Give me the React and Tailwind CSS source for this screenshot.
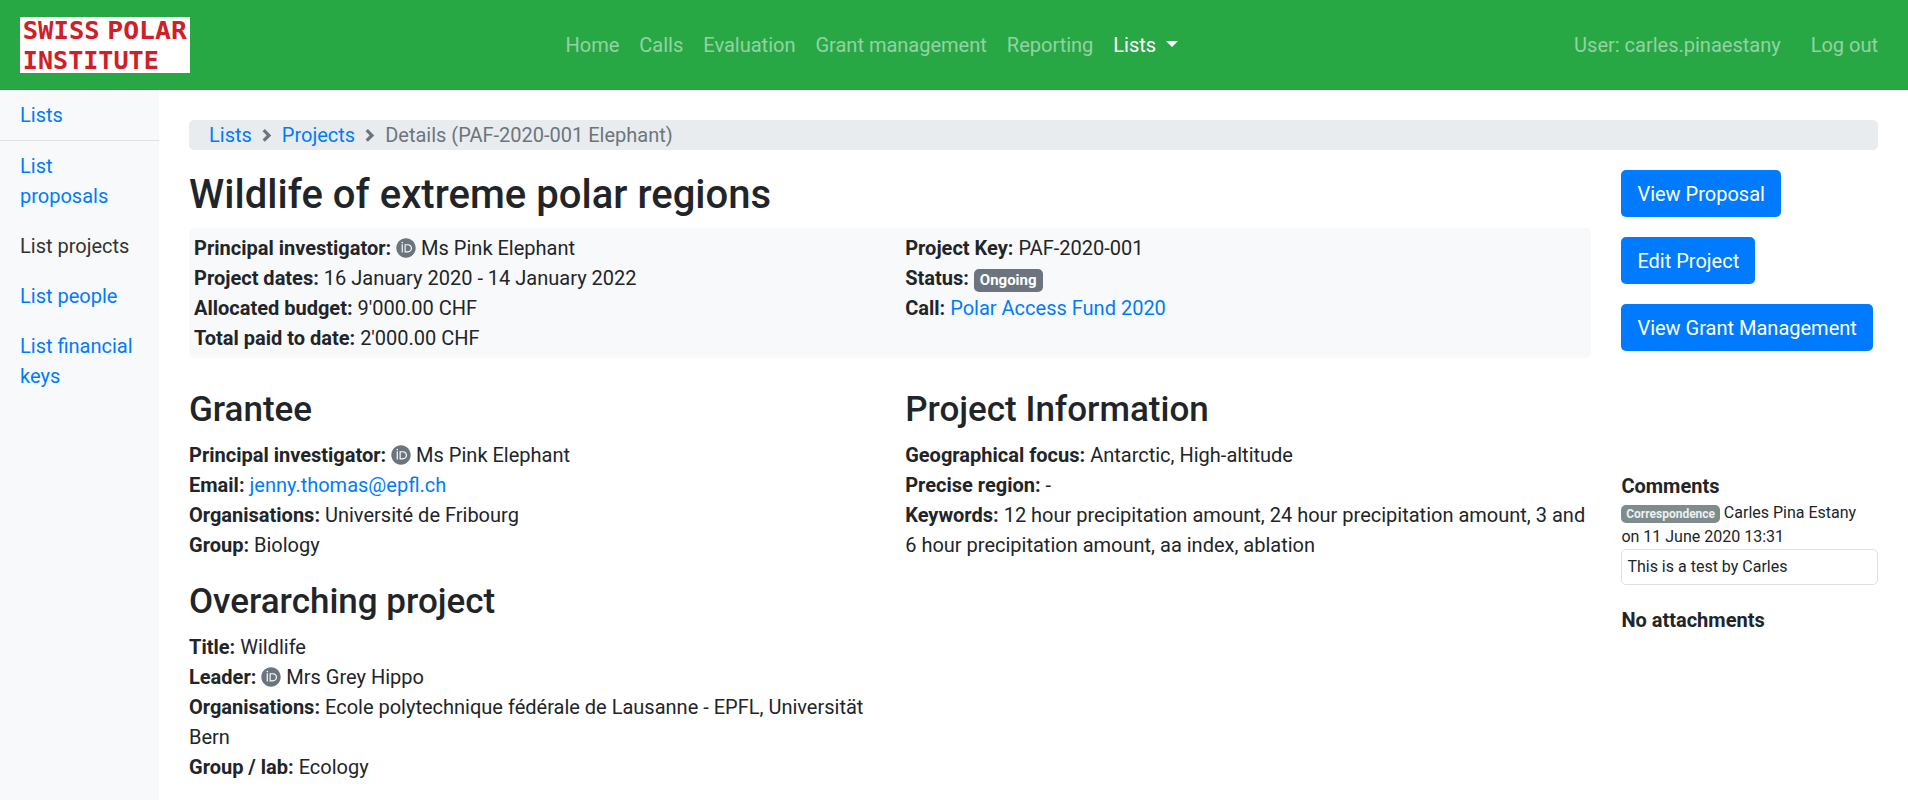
import React from "react";

function Orcid() {
  return (
    <svg viewBox="0 0 512 512" className="inline-block h-5 w-5 align-[-2.5px]" fill="#6c757d">
      <path d="M294.75 188.19h-45.92V342h47.47c67.62 0 83.12-51.34 83.12-76.91 0-41.64-26.54-76.9-84.67-76.9zM256 8C119 8 8 119 8 256s111 248 248 248 248-111 248-248S393 8 256 8zm-80.79 360.76h-29.84v-207.5h29.84zm-14.92-231.14a19.57 19.57 0 1 1 19.57-19.57 19.64 19.64 0 0 1-19.57 19.57zM300 369h-81V161.26h80.6c76.73 0 110.44 54.83 110.44 103.85C410 318.39 368.38 369 300 369z" />
    </svg>
  );
}

function Chevron() {
  return (
    <svg viewBox="0 0 10 16" className="mx-[10px] h-4 w-[10px]" fill="none" stroke="#6c757d" strokeWidth="3.3">
      <path d="M1.7 3.2l5.2 5.2-5.2 5.2" />
    </svg>
  );
}

function Logo() {
  return (
    <svg width="170" height="56" viewBox="0 0 170 56" className="overflow-visible bg-white">
      <g fill="#cf2027" fontFamily="'DejaVu Sans Mono', monospace" fontWeight="700" fontSize="24.7">
        <text x="2.7" y="22" textLength="77" lengthAdjust="spacingAndGlyphs">SWISS</text>
        <text x="87.3" y="22" textLength="79.5" lengthAdjust="spacingAndGlyphs">POLAR</text>
        <text x="2.8" y="52" textLength="136" lengthAdjust="spacingAndGlyphs">INSTITUTE</text>
      </g>
    </svg>
  );
}

function Field({ label, children }) {
  return (
    <div>
      <b className="font-bold">{label}:</b> {children}
    </div>
  );
}

function Link({ children }) {
  return <a className="text-[#007bff]">{children}</a>;
}

function Heading({ children }) {
  return <h2 className="mb-[9px] pt-px text-[35px] leading-[42px] font-medium">{children}</h2>;
}

function Button({ children }) {
  return (
    <button className="h-[47px] rounded-[5px] bg-[#007bff] px-4 text-white">{children}</button>
  );
}

const NAV = ["Home", "Calls", "Evaluation", "Grant management", "Reporting"];

export default function App() {
  return (
    <div className="flex h-[800px] flex-col overflow-hidden bg-white font-['Roboto',sans-serif] text-[20px] leading-[30px] text-[#212529]">
      <header className="flex h-[90px] shrink-0 items-center border-b border-[#28a13f] bg-[#28a745] px-5 text-white/50">
        <Logo />
        <nav className="ml-[365.5px] flex">
          {NAV.map((n) => (
            <a key={n} className="px-[10px]">{n}</a>
          ))}
          <a className="flex items-center px-[10px] text-white">
            Lists
            <svg width="12" height="6" viewBox="0 0 12 6" className="ml-[9.5px] -mt-0.5" fill="currentColor">
              <path d="M0 0h12L6 6z" />
            </svg>
          </a>
        </nav>
        <div className="ml-auto flex gap-[10px]">
          <span className="px-[10px]">User: carles.pinaestany</span>
          <a className="px-[10px]">Log out</a>
        </div>
      </header>
      <div className="flex min-h-0 flex-1">
        <aside className="w-[159px] shrink-0 bg-[#f8f9fa] text-[#007bff]">
          <div className="border-b border-[#dee2e6] px-5 py-[10px]">Lists</div>
          <div className="px-5 py-[10px]">List proposals</div>
          <div className="px-5 py-[10px] text-[#333]">List projects</div>
          <div className="px-5 py-[10px]">List people</div>
          <div className="px-5 py-[10px]">List financial keys</div>
        </aside>
        <main className="flex-1 px-[30px] pt-[30px]">
          <div className="flex h-[30px] items-center rounded-[5px] bg-[#e9ecef] px-5 text-[#6c757d]">
            <Link>Lists</Link>
            <Chevron />
            <Link>Projects</Link>
            <Chevron />
            <span>Details (PAF-2020-001 Elephant)</span>
          </div>
          <div className="mt-5 flex gap-[30px]">
            <div className="w-[1402.4px] shrink-0">
              <h1 className="mb-[9px] pt-px text-[40px] leading-[48px] font-medium tracking-[0.03px]">
                Wildlife of extreme polar regions
              </h1>
              <section className="grid grid-cols-2 gap-x-[30px] rounded-[5px] bg-[#f8f9fa] py-[5px]">
                <div className="pl-[5px]">
                  <Field label="Principal investigator"><Orcid /> Ms Pink Elephant</Field>
                  <Field label="Project dates">16 January 2020 - 14 January 2022</Field>
                  <Field label="Allocated budget">9'000.00 CHF</Field>
                  <Field label="Total paid to date">2'000.00 CHF</Field>
                </div>
                <div>
                  <Field label="Project Key">PAF-2020-001</Field>
                  <Field label="Status">
                    <span className="inline-block rounded-[5px] bg-[#6c757d] px-[6px] pt-[3.75px] pb-[3.75px] align-baseline text-[15px] leading-[15px] font-bold text-white">
                      Ongoing
                    </span>
                  </Field>
                  <Field label="Call"><Link>Polar Access Fund 2020</Link></Field>
                </div>
              </section>
              <div className="mt-[30px] grid grid-cols-2 gap-x-[30px]">
                <div>
                  <Heading>Grantee</Heading>
                  <Field label="Principal investigator"><Orcid /> Ms Pink Elephant</Field>
                  <Field label="Email"><Link>jenny.thomas@epfl.ch</Link></Field>
                  <Field label="Organisations">Université de Fribourg</Field>
                  <Field label="Group">Biology</Field>
                  <div className="h-5" />
                  <Heading>Overarching project</Heading>
                  <Field label="Title">Wildlife</Field>
                  <Field label="Leader"><Orcid /> Mrs Grey Hippo</Field>
                  <Field label="Organisations">
                    Ecole polytechnique fédérale de Lausanne - EPFL, Universität Bern
                  </Field>
                  <Field label="Group / lab">Ecology</Field>
                </div>
                <div>
                  <Heading>Project Information</Heading>
                  <Field label="Geographical focus">Antarctic, High-altitude</Field>
                  <Field label="Precise region">-</Field>
                  <Field label="Keywords">
                    12 hour precipitation amount, 24 hour precipitation amount, 3 and 6 hour
                    precipitation amount, aa index, ablation
                  </Field>
                </div>
              </div>
            </div>
            <div className="min-w-0 flex-1">
              <div className="flex flex-col items-start gap-5">
                <Button>View Proposal</Button>
                <Button>Edit Project</Button>
                <Button>View Grant Management</Button>
              </div>
              <div className="mt-[120px] font-bold">Comments</div>
              <div className="text-[16px] leading-[24px]">
                <span className="inline-block rounded-[5px] bg-[#7f8c8d] px-[4.8px] py-[3px] align-baseline text-[12px] leading-[12px] font-bold text-[#ecf0f1]">
                  Correspondence
                </span>{" "}
                Carles Pina Estany
                <br />
                on 11 June 2020 13:31
                <div className="rounded-[5px] border border-[#dee2e6] p-[5px]">
                  This is a test by Carles
                </div>
              </div>
              <div className="mt-5 font-bold">No attachments</div>
            </div>
          </div>
        </main>
      </div>
    </div>
  );
}
